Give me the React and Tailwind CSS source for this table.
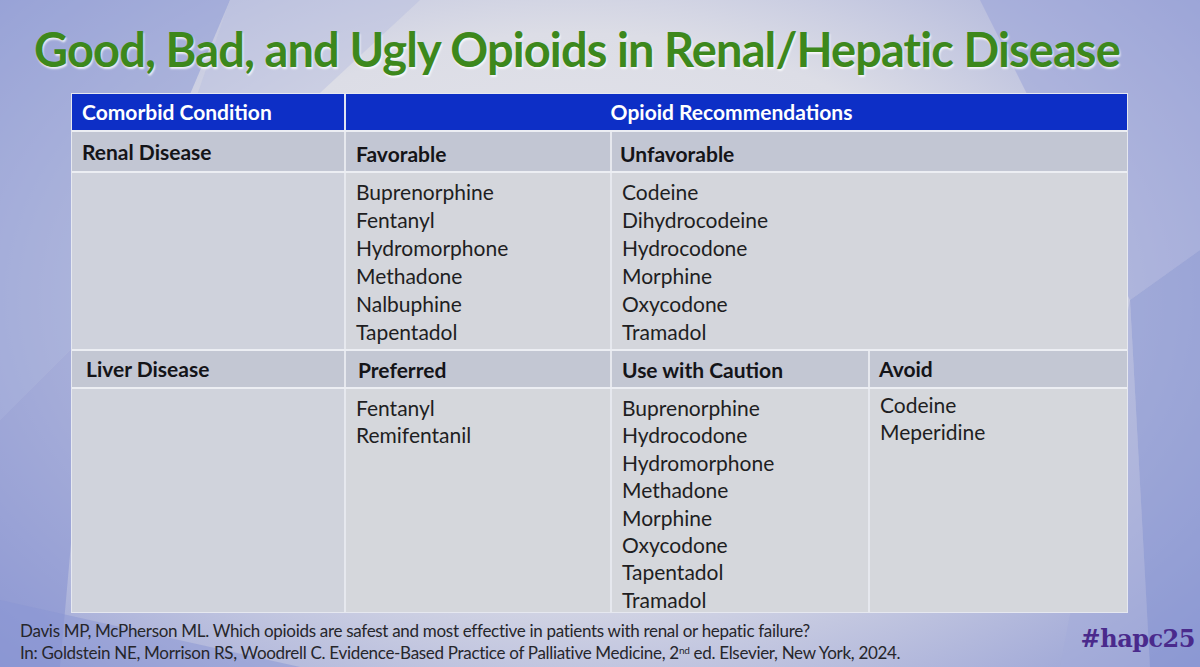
const renal = {
  favorable: ["Buprenorphine", "Fentanyl", "Hydromorphone", "Methadone", "Nalbuphine", "Tapentadol"],
  unfavorable: ["Codeine", "Dihydrocodeine", "Hydrocodone", "Morphine", "Oxycodone", "Tramadol"],
};

const liver = {
  preferred: ["Fentanyl", "Remifentanil"],
  caution: ["Buprenorphine", "Hydrocodone", "Hydromorphone", "Methadone", "Morphine", "Oxycodone", "Tapentadol", "Tramadol"],
  avoid: ["Codeine", "Meperidine"],
};

function DrugList({ items, tight }) {
  return (
    <ul className={`px-[10px] pt-[5px] text-[21px] text-[#1e1e22] ${tight ? "leading-[27.4px]" : "leading-[28px]"}`}>
      {items.map((name) => (
        <li key={name}>{name}</li>
      ))}
    </ul>
  );
}

function Backdrop() {
  return (
    <svg className="absolute inset-0 h-full w-full" viewBox="0 0 1200 667" preserveAspectRatio="none">
      <polygon points="0,0 230,0 90,330 0,420" fill="#8e9ad6" opacity="0.55" />
      <polygon points="0,420 90,330 60,667 0,667" fill="#7f8ccf" opacity="0.5" />
      <polygon points="230,0 420,0 140,260" fill="#b9bfe0" opacity="0.5" />
      <polygon points="1200,0 980,0 1130,300 1200,250" fill="#9aa4d8" opacity="0.55" />
      <polygon points="1130,300 1200,250 1200,667 1150,667" fill="#8794d2" opacity="0.6" />
      <polygon points="1130,300 1150,667 1060,667" fill="#a3abd9" opacity="0.5" />
      <polygon points="0,600 300,667 0,667" fill="#8a96d4" opacity="0.5" />
    </svg>
  );
}

export default function App() {
  return (
    <div
      className="relative h-[667px] w-[1200px] overflow-hidden bg-[radial-gradient(ellipse_70%_80%_at_48%_45%,#e7e7ec_0%,#dcdde6_50%,#aab1da_85%,#949fd4_100%)]"
      style={{ fontFamily: "Lato, 'Noto Sans', sans-serif" }}
    >
      <Backdrop />

      <div className="relative flex h-full flex-col">
        <h1 className="pl-[34px] pt-[17px] text-[47px] font-bold leading-[64px] tracking-[-0.9px] text-[#3d881c] [text-shadow:1px_2px_2px_rgba(255,255,255,0.8)]">
          Good, Bad, and Ugly Opioids in Renal/Hepatic Disease
        </h1>

        <div className="ml-[72px] mt-[13px] w-[1055px] bg-[#eceef3] shadow-[0_0_0_1px_#e6e8f0]">
          {/* header */}
          <div className="flex h-[36px] bg-[#0d2fc6] text-[21px] font-bold text-white">
            <div className="flex w-[274px] items-center border-r-2 border-[#dfe3f2] px-[10px]">Comorbid Condition</div>
            <div className="flex flex-1 items-center justify-center pr-[10px]">Opioid Recommendations</div>
          </div>

          {/* renal */}
          <div className="mt-[2px] flex h-[39px] bg-[#c2c6d3] text-[21px] font-bold text-[#141418]">
            <div className="flex w-[274px] items-center border-r-2 border-[#e6e8ee] px-[10px]">Renal Disease</div>
            <div className="flex w-[266px] items-center border-r-2 border-[#e6e8ee] px-[10px] pt-[4px]">Favorable</div>
            <div className="flex flex-1 items-center px-[8px] pt-[4px]">Unfavorable</div>
          </div>
          <div className="mt-[2px] flex h-[176px] bg-[#d4d6dc]">
            <div className="w-[274px] border-r-2 border-[#e6e8ee] bg-[#cfd2dc]" />
            <div className="w-[266px] border-r-2 border-[#e6e8ee]">
              <DrugList items={renal.favorable} />
            </div>
            <div className="flex-1">
              <DrugList items={renal.unfavorable} />
            </div>
          </div>

          {/* liver */}
          <div className="mt-[2px] flex h-[36px] bg-[#c3c7d3] text-[21px] font-bold text-[#141418]">
            <div className="flex w-[274px] items-center border-r-2 border-[#e6e8ee] px-[14px]">Liver Disease</div>
            <div className="flex w-[266px] items-center border-r-2 border-[#e6e8ee] px-[12px] pt-[2px]">Preferred</div>
            <div className="flex w-[258px] items-center border-r-2 border-[#e6e8ee] px-[10px] pt-[2px]">Use with Caution</div>
            <div className="flex flex-1 items-center px-[9px]">Avoid</div>
          </div>
          <div className="mt-[2px] flex h-[223px] bg-[#d5d7dc]">
            <div className="w-[274px] border-r-2 border-[#e6e8ee] bg-[#d0d3dc]" />
            <div className="w-[266px] border-r-2 border-[#e6e8ee]">
              <DrugList items={liver.preferred} tight />
            </div>
            <div className="w-[258px] border-r-2 border-[#e6e8ee]">
              <DrugList items={liver.caution} tight />
            </div>
            <div className="flex-1">
              <div className="-mt-[3px]">
                <DrugList items={liver.avoid} tight />
              </div>
            </div>
          </div>
        </div>

        <div className="mt-auto flex items-center justify-between pb-[3px] pl-[20px] pr-[5px]">
          <div className="text-[17px] leading-[22px] tracking-[-0.3px] text-[#26262b]">
            <p>Davis MP, McPherson ML. Which opioids are safest and most effective in patients with renal or hepatic failure?</p>
            <p>
              In: Goldstein NE, Morrison RS, Woodrell C. Evidence-Based Practice of Palliative Medicine, 2
              <sup className="text-[10px]">nd</sup> ed. Elsevier, New York, 2024.
            </p>
          </div>
          <div
            className="mb-[6px] text-[24px] font-bold tracking-[-0.5px] text-[#4a2a8c]"
            style={{ fontFamily: "'DejaVu Serif', 'Liberation Serif', serif" }}
          >
            #hapc25
          </div>
        </div>
      </div>
    </div>
  );
}
